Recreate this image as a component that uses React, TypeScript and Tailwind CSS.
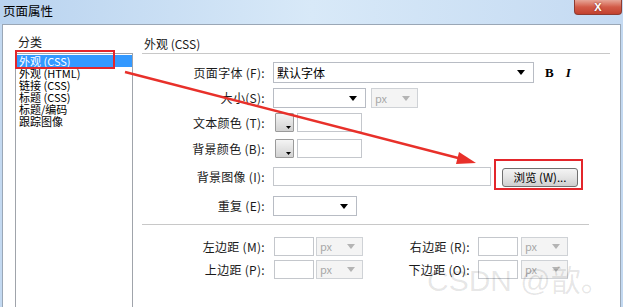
const font = { fontFamily: '"Noto Sans CJK SC", "Liberation Sans", sans-serif' };

const Arrow = ({ disabled }: { disabled?: boolean }) => (
  <svg width="8" height="5" viewBox="0 0 8 5" className="shrink-0">
    <path d="M0 0h8L4 5z" fill={disabled ? "#b4b4b4" : "#000"} />
  </svg>
);

const Select = ({ w, text, arrowRight = 8 }: { w: string; text?: string; arrowRight?: number }) => (
  <div className={`${w} h-full flex items-center border border-[#b8bcc4] bg-white pl-[3px] text-[12px]`}>
    <span className="flex-1 leading-none">{text}</span>
    <span style={{ marginRight: arrowRight }}>
      <Arrow />
    </span>
  </div>
);

const Px = () => (
  <div className="w-[47px] h-full flex items-center border border-[#cfd2d6] bg-[#f4f4f4] pl-[3px] pr-[7px] text-[11px] text-[#a8a8a8]">
    <span className="flex-1 leading-none">px</span>
    <Arrow disabled />
  </div>
);

const Swatch = () => (
  <div className="w-[19px] h-[19px] ml-[2px] border border-[#9a9a9a] bg-gradient-to-b from-[#f4f4f4] to-[#d2d2d2] relative rounded-[1px]">
    <svg width="5" height="3" viewBox="0 0 5 3" className="absolute right-[2px] bottom-[2px]">
      <path d="M0 0h5L2.5 3z" fill="#000" />
    </svg>
  </div>
);

const Label = ({ children, w = "w-[124px]" }: { children: string; w?: string }) => (
  <div className={`${w} text-right pr-[1px] text-[12px] leading-none text-[#1a1a1a] tracking-[0.3px]`}>{children}</div>
);

const Input = ({ w }: { w: string }) => <div className={`${w} h-full border border-[#c4c7cc] bg-white`} />;

export default function App() {
  return (
    <div className="w-[623px] h-[307px] relative overflow-hidden flex flex-col bg-[#c3d9f1]" style={font}>
      {/* title bar */}
      <div className="h-[24px] flex items-start bg-gradient-to-r from-[#b9d3ef] via-[#d8e9f8] to-[#c4daf2]">
        <div className="pl-[3px] pt-[4px] text-[12.5px] leading-[14px] text-black">页面属性</div>
        <div className="ml-auto mr-[1px] w-[48px] h-[15px] rounded-b-[4px] border border-t-0 border-[#8d3b31] bg-gradient-to-b from-[#e6a597] via-[#d25b48] to-[#c2412e] flex items-center justify-center">
          <span className="text-white text-[11px] font-bold leading-none" style={{ fontFamily: '"Liberation Sans", sans-serif', textShadow: "0 0 2px #7a2318" }}>
            X
          </span>
        </div>
      </div>

      {/* body */}
      <div className="flex-1 mx-[2px] bg-white border-l border-t border-r border-[#9aa7b6] flex">
        {/* category column */}
        <div className="w-[131px] pl-[12px] flex flex-col">
          <div className="pl-[3px] pt-[10px] h-[28px] text-[12px] leading-[14px] text-[#1a1a1a]">分类</div>
          <div className="w-[118px] flex-1 border border-b-0 border-[#a0a4ab] pt-[1px] text-[11px] leading-[12px]">
            <div className="h-[12px] bg-[#3399ff] text-white pl-[3px]">外观 (CSS)</div>
            <div className="h-[12px] pl-[3px]">外观 (HTML)</div>
            <div className="h-[12px] pl-[3px]">链接 (CSS)</div>
            <div className="h-[12px] pl-[3px]">标题 (CSS)</div>
            <div className="h-[12px] pl-[3px]">标题/编码</div>
            <div className="h-[12px] pl-[3px]">跟踪图像</div>
          </div>
        </div>

        {/* settings column */}
        <div className="flex-1 pl-[8px] pr-[10px] flex flex-col">
          <div className="pt-[12px] pb-[2px] pl-[2px] text-[12px] leading-[14px] border-b border-[#c8c8c8] text-[#1a1a1a]">
            外观 (CSS)
          </div>

          <div className="mt-[8px] h-[21px] flex items-center">
            <Label>页面字体 (F):</Label>
            <div className="ml-[7px] h-full">
              <Select w="w-[261px]" text="默认字体" />
            </div>
            <span className="ml-[11px] text-[13px] font-bold" style={{ fontFamily: '"Liberation Serif", serif' }}>B</span>
            <span className="ml-[12px] text-[13px] italic font-bold" style={{ fontFamily: '"Liberation Serif", serif' }}>I</span>
          </div>

          <div className="mt-[5px] h-[20px] flex items-center">
            <Label>大小(S):</Label>
            <div className="ml-[7px] h-full flex gap-[5px]">
              <Select w="w-[93px]" />
              <Px />
            </div>
          </div>

          <div className="mt-[5px] h-[19px] flex items-center">
            <Label>文本颜色 (T):</Label>
            <div className="ml-[7px] h-full flex gap-[3px]">
              <Swatch />
              <Input w="w-[65px]" />
            </div>
          </div>

          <div className="mt-[7px] h-[19px] flex items-center">
            <Label>背景颜色 (B):</Label>
            <div className="ml-[7px] h-full flex gap-[3px]">
              <Swatch />
              <Input w="w-[65px]" />
            </div>
          </div>

          <div className="mt-[9px] h-[19px] flex items-center">
            <Label>背景图像 (I):</Label>
            <div className="ml-[7px] h-full">
              <Input w="w-[218px]" />
            </div>
            <div className="ml-[11px] mt-[2px] w-[76px] h-[19px] rounded-[3px] border border-[#707070] bg-gradient-to-b from-[#f4f4f4] via-[#e4e4e4] to-[#cfcfcf] flex items-center justify-center text-[11.5px] leading-none">
              浏览 (W)...
            </div>
          </div>

          <div className="mt-[10px] h-[20px] flex items-center">
            <Label>重复 (E):</Label>
            <div className="ml-[7px] h-full">
              <Select w="w-[84px]" />
            </div>
          </div>

          <div className="mt-[8px] mr-[21px] border-b border-[#c8c8c8]" />

          <div className="mt-[12px] h-[19px] flex items-center">
            <Label>左边距 (M):</Label>
            <div className="ml-[8px] h-full flex gap-[2px]">
              <Input w="w-[40px]" />
              <Px />
            </div>
            <Label w="w-[108px]">右边距 (R):</Label>
            <div className="ml-[7px] h-full flex gap-[3px]">
              <Input w="w-[40px]" />
              <Px />
            </div>
          </div>

          <div className="mt-[4px] h-[19px] flex items-center">
            <Label>上边距 (P):</Label>
            <div className="ml-[8px] h-full flex gap-[2px]">
              <Input w="w-[40px]" />
              <Px />
            </div>
            <Label w="w-[108px]">下边距 (O):</Label>
            <div className="ml-[7px] h-full flex gap-[3px]">
              <Input w="w-[40px]" />
              <Px />
            </div>
          </div>
        </div>
      </div>

      {/* annotations */}
      <div className="absolute left-[15px] top-[50px] w-[100px] h-[19px] border-2 border-[#e3262b]" />
      <div className="absolute left-[494px] top-[159px] w-[89px] h-[31px] border-[2.5px] border-[#e3262b]" />
      <svg className="absolute left-0 top-0 pointer-events-none" width="623" height="307">
        <line x1="125" y1="72" x2="462" y2="159" stroke="#e8302a" strokeWidth="2.5" />
        <path d="M476 163 L459 152 L456 164 Z" fill="#e8302a" />
      </svg>
      <div
        className="absolute left-[427px] top-[263px] text-[30px] leading-[36px] text-black/10 whitespace-nowrap"
        style={{ fontFamily: '"Liberation Sans", "Noto Sans CJK SC", sans-serif' }}
      >
        CSDN @歆。
      </div>
    </div>
  );
}
